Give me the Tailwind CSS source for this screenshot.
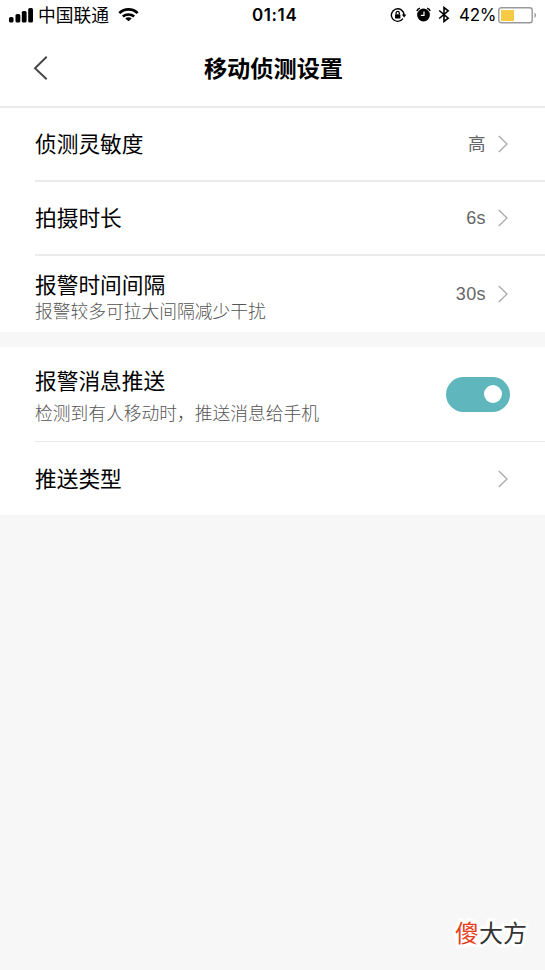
<!DOCTYPE html>
<html lang="zh-CN">
<head>
<meta charset="utf-8">
<meta name="viewport" content="width=device-width, initial-scale=1">
<title>移动侦测设置</title>
<script src="https://cdn.jsdelivr.net/npm/@tailwindcss/browser@4"></script>
</head>
<body class="w-[545px] h-[970px] overflow-hidden bg-[#f7f7f7] text-black font-['Noto_Sans_CJK_SC',sans-serif] flex flex-col">
<header class="h-[108px] shrink-0 bg-white border-b-2 border-[#ebebeb]">
  <div class="h-[30px] grid grid-cols-[252px_1fr_155px] items-center">
    <div class="flex items-center pl-[9px]">
      <svg class="w-6 h-[15px]" viewBox="0 0 24 15"><rect x="0" y="9" width="4.5" height="5.5" rx="1.6"/><rect x="6.5" y="6" width="4.8" height="8.5" rx="1.6"/><rect x="12.8" y="3" width="4.8" height="11.5" rx="1.6"/><rect x="19.2" y="0" width="4.8" height="14.5" rx="1.6"/></svg>
      <span class="ml-[5px] pb-[2px] text-[17.75px] leading-[28px]">中国联通</span>
      <svg class="ml-[9px] mb-px w-[21px] h-[15px]" viewBox="0 0 22 15" fill="none" stroke="#000" stroke-width="2.8"><path d="M1.4 6.1C6.7.9 15.3.9 20.6 6.1M5.1 9.7c3.2-2.9 8.6-2.9 11.8 0"/><path d="M11 14.5 7.6 11.6c1.8-1.5 5-1.5 6.8 0Z" fill="#000" stroke="none"/></svg>
    </div>
    <div class="font-[Inter,sans-serif] font-semibold text-[17px] leading-[30px] tracking-[0.6px]">01:14</div>
    <div class="flex items-center">
      <svg class="mb-px w-[17px] h-[16px]" viewBox="0 0 17 16"><path d="M12.9 11.6A6.3 6.3 0 1 1 14 8" fill="none" stroke="#000" stroke-width="1.4"/><path d="M11.8 7.5H16.4L14.1 10.4Z"/><rect x="5" y="7.2" width="5.4" height="4.2" rx=".5"/><path d="M6.1 7.3V6a1.6 1.6 0 0 1 3.2 0V7.3" fill="none" stroke="#000" stroke-width="1.3"/></svg>
      <svg class="ml-[9px] mb-px w-[15px] h-[15px]" viewBox="0 0 15 15"><circle cx="7.5" cy="8" r="6.4"/><path d="M.9 4.1Q1.4 1.9 3.9 1.3M11.1 1.3Q13.6 1.9 14.1 4.1" fill="none" stroke="#000" stroke-width="1.5"/><path d="M8 4.5V8.4H4.8" fill="none" stroke="#fff" stroke-width="1.2"/></svg>
      <svg class="ml-[7px] mb-px w-[12px] h-[17px]" viewBox="0 0 12 17" fill="none" stroke="#000" stroke-width="1.6"><path d="M1.2 4.5 10.2 12.2 6 15.5V1.5L10.2 4.8 1.2 12.5"/></svg>
      <span class="ml-[9px] w-[39px] whitespace-nowrap font-[Inter,sans-serif] text-[17px] leading-[30px] tracking-[-0.3px]">42%</span>
      <svg class="w-[39px] h-[17px]" viewBox="0 0 39 17"><rect x=".8" y=".8" width="33.4" height="15" rx="2.5" fill="none" stroke="#999" stroke-width="1.4"/><rect x="3" y="3" width="13" height="11" fill="#f7ca45"/><path d="M36.5 5.5c2 1 2 4.5 0 5.5Z" fill="#999"/></svg>
    </div>
  </div>
  <div class="h-[76px] grid grid-cols-[80px_1fr_78px] items-center">
    <svg class="ml-[33px] mb-px w-4 h-6" viewBox="0 0 16 24" fill="none" stroke="#444" stroke-width="1.9"><path d="M13.7.8 2 12.3 13.7 23.3"/></svg>
    <h1 class="pb-[2px] text-center text-[23.2px] leading-[34px] font-bold">移动侦测设置</h1>
  </div>
</header>
<main>
  <section class="bg-white pl-[35px]">
    <div class="h-[74px] border-b-2 border-[#ebebeb] pr-[37px] flex items-center">
      <span class="flex-1 pb-[2px] text-[21.7px] leading-8">侦测灵敏度</span>
      <span class="pb-[2px] text-[17.5px] leading-6 text-[#666]">高</span>
      <svg class="ml-[12.5px] w-[10px] h-[18px]" viewBox="0 0 10 18" fill="none" stroke="#aaa" stroke-width="1.3"><path d="M.8 1 9 9 .8 17"/></svg>
    </div>
    <div class="h-[74px] border-b-2 border-[#ebebeb] pr-[37px] flex items-center">
      <span class="flex-1 pb-[2px] text-[21.7px] leading-8">拍摄时长</span>
      <span class="font-['Liberation_Sans',sans-serif] text-[18px] leading-6 tracking-[0.4px] text-[#666]">6s</span>
      <svg class="ml-[12px] w-[10px] h-[18px]" viewBox="0 0 10 18" fill="none" stroke="#aaa" stroke-width="1.3"><path d="M.8 1 9 9 .8 17"/></svg>
    </div>
    <div class="h-[76px] pr-[37px] flex items-center">
      <div class="flex-1 pt-[4px]">
        <div class="text-[21.7px] leading-[28px]">报警时间间隔</div>
        <div class="text-[17.75px] leading-[25px] text-[#555] font-light">报警较多可拉大间隔减少干扰</div>
      </div>
      <span class="font-['Liberation_Sans',sans-serif] text-[18px] leading-6 tracking-[0.4px] text-[#666]">30s</span>
      <svg class="ml-[12px] w-[10px] h-[18px]" viewBox="0 0 10 18" fill="none" stroke="#aaa" stroke-width="1.3"><path d="M.8 1 9 9 .8 17"/></svg>
    </div>
  </section>
  <section class="mt-[15px] bg-white pl-[35px]">
    <div class="h-[95px] border-b border-[#ebebeb] pr-[35px] flex items-center">
      <div class="flex-1 pt-[4px]">
        <div class="text-[21.7px] leading-[32px]">报警消息推送</div>
        <div class="text-[17.75px] leading-[32px] text-[#555] font-light">检测到有人移动时，推送消息给手机</div>
      </div>
      <div class="w-16 h-[35px] rounded-full bg-[#5fb6bd] flex items-center justify-end pr-[8.5px]"><span class="size-[17.5px] shrink-0 rounded-full bg-white"></span></div>
    </div>
    <div class="h-[73px] pr-[37px] flex items-center">
      <span class="flex-1 pb-[2px] text-[21.7px] leading-8">推送类型</span>
      <svg class="ml-[12px] w-[10px] h-[18px]" viewBox="0 0 10 18" fill="none" stroke="#aaa" stroke-width="1.3"><path d="M.8 1 9 9 .8 17"/></svg>
    </div>
  </section>
</main>
<footer class="mt-auto mb-[20px] pr-[18px] text-right text-[24px] leading-9 text-[#333] [-webkit-text-stroke:6px_white] [paint-order:stroke_fill]"><span class="text-[#e8401c]">傻</span>大方</footer>
</body>
</html>
